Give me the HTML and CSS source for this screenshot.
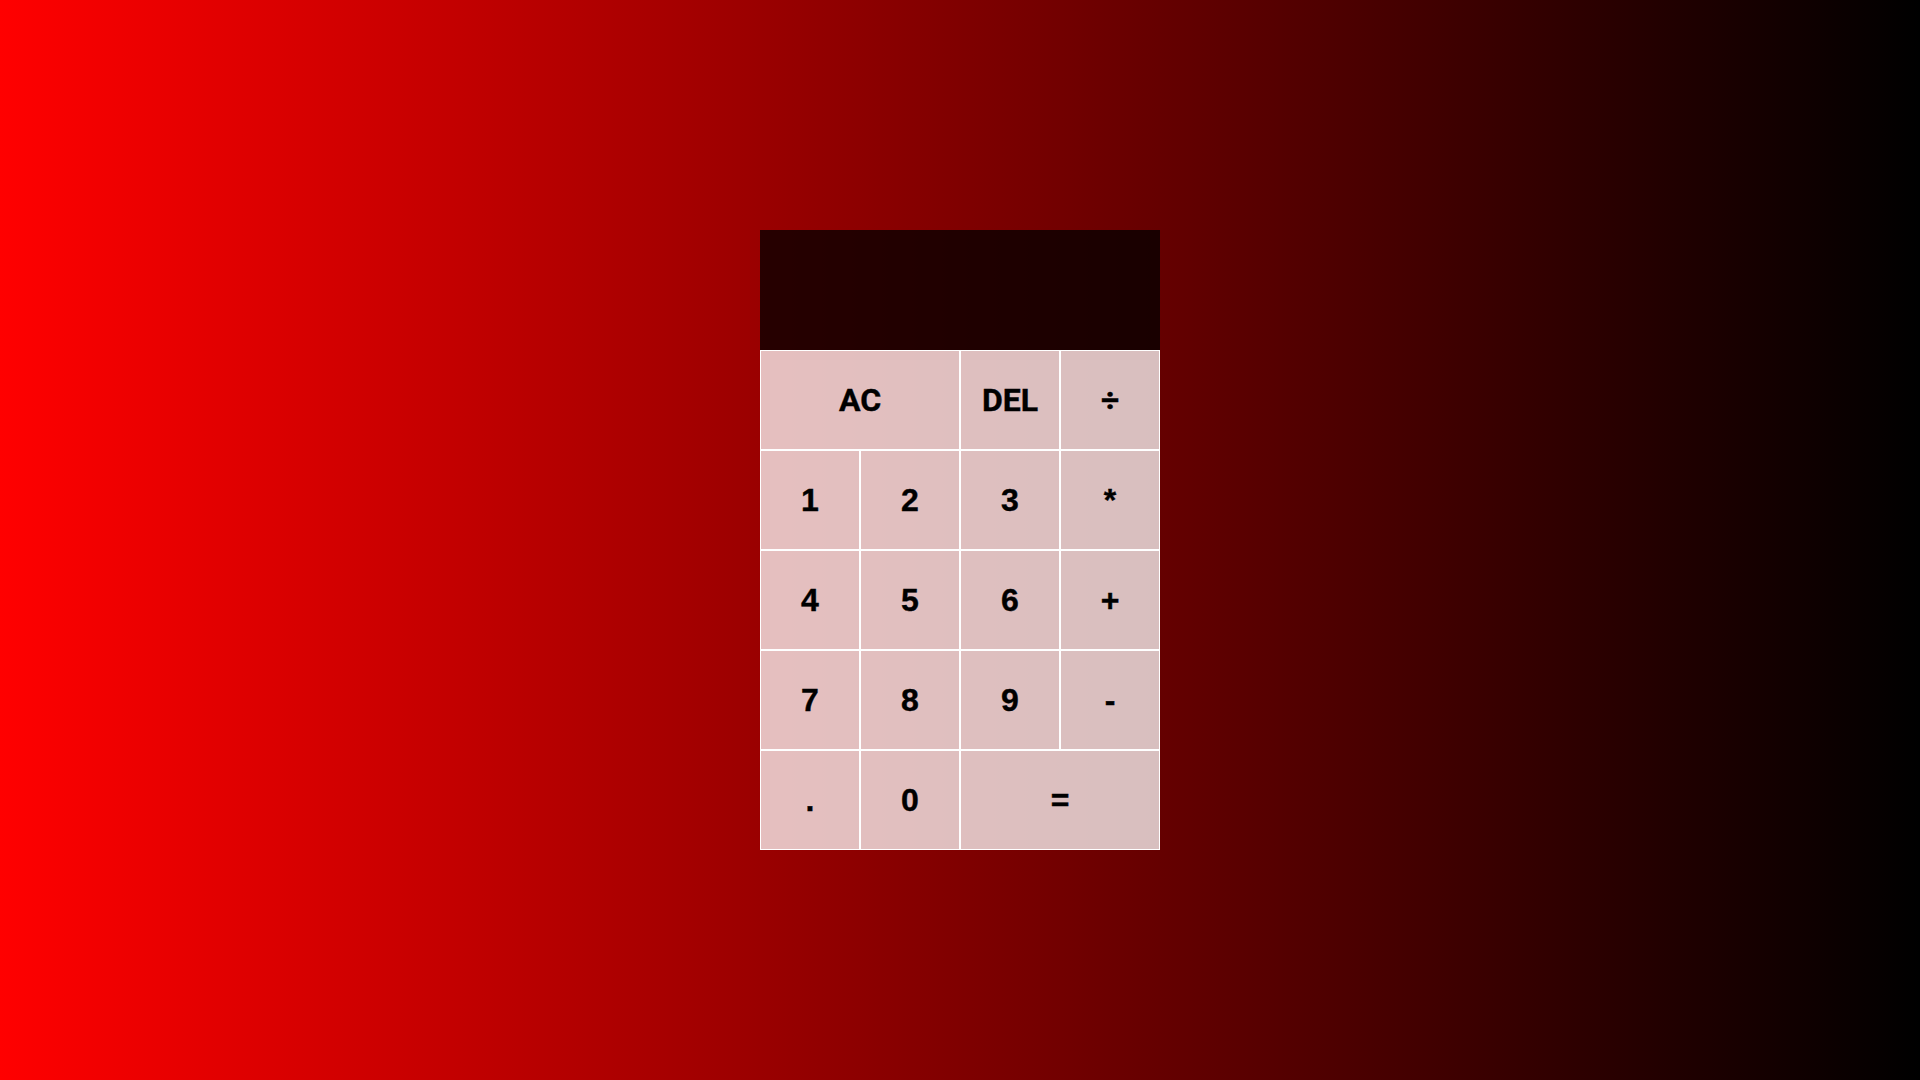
FILE: index.html
```html
<!DOCTYPE html>
<html lang="en">
<head>
<meta charset="utf-8">
<title>Calculator</title>
<link rel="stylesheet" href="styles.css">
</head>
<body>
<div class="calculator-grid">
  <div class="output">
    <div class="previous-operand"></div>
    <div class="current-operand"></div>
  </div>
  <button class="span-two word">AC</button>
  <button class="word">DEL</button>
  <button class="word">÷</button>
  <button>1</button>
  <button>2</button>
  <button>3</button>
  <button>*</button>
  <button>4</button>
  <button>5</button>
  <button>6</button>
  <button>+</button>
  <button>7</button>
  <button>8</button>
  <button>9</button>
  <button>-</button>
  <button>.</button>
  <button>0</button>
  <button class="span-two">=</button>
</div>
</body>
</html>
```

FILE: styles.css
```css
*, *::before, *::after {
  box-sizing: border-box;
}

body {
  margin: 0;
  padding: 0;
  min-height: 100vh;
  background: linear-gradient(to right, #ff0000, #000000);
  font-family: "Liberation Sans", Arial, sans-serif;
}

.calculator-grid {
  display: grid;
  justify-content: center;
  align-content: center;
  min-height: 100vh;
  grid-template-columns: repeat(4, 100px);
  grid-template-rows: minmax(120px, auto) repeat(5, 100px);
}

.calculator-grid > button {
  cursor: pointer;
  font-family: "Liberation Sans", Arial, sans-serif;
  font-weight: bold;
  font-size: 2rem;
  color: #000;
  -webkit-text-stroke: 0.4px #000;
  border: 1px solid #fff;
  outline: none;
  margin: 0;
  padding: 0;
  background-color: rgba(255, 255, 255, .75);
}

.calculator-grid > button.word {
  font-family: Roboto, "Liberation Sans", sans-serif;
}

.span-two {
  grid-column: span 2;
}

.output {
  grid-column: 1 / -1;
  background-color: rgba(0, 0, 0, .75);
  display: flex;
  align-items: flex-end;
  justify-content: space-around;
  flex-direction: column;
  padding: 10px;
  word-wrap: break-word;
  word-break: break-all;
}

.output .previous-operand {
  color: rgba(255, 255, 255, .75);
  font-size: 1.5rem;
}

.output .current-operand {
  color: #fff;
  font-size: 2.5rem;
}
```
